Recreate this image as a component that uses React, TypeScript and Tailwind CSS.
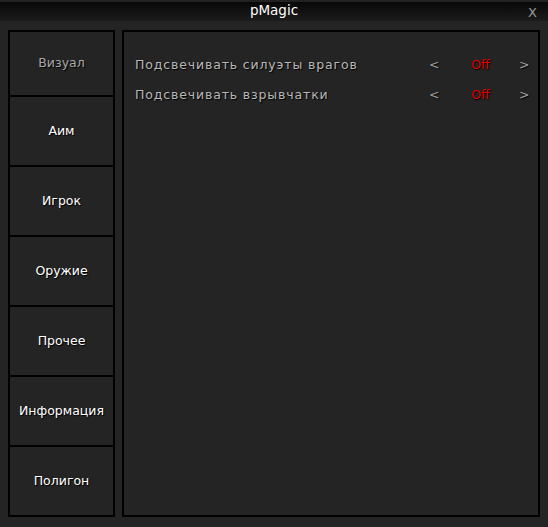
import React from "react";

const items = ["Визуал", "Аим", "Игрок", "Оружие", "Прочее", "Информация", "Полигон"];
const rows = ["Подсвечивать силуэты врагов", "Подсвечивать взрывчатки"];

export default function App() {
  return (
    <div
      className="w-[548px] h-[527px] bg-[#242424] flex flex-col overflow-hidden"
      style={{ fontFamily: '"DejaVu Sans", "Liberation Sans", sans-serif' }}
    >
      <div className="h-[21px] border-t-2 border-[#222] bg-gradient-to-b from-[#080808] to-[#1c1c1c] relative flex items-center justify-center">
        <span className="text-white text-[13.5px] leading-none -mt-[2px]">pMagic</span>
        <span className="absolute right-[11px] top-[1px] text-[#9a9a9a] text-[13px]">X</span>
      </div>
      <div className="flex gap-[7px] pl-[8px] pr-[8px] pt-[9px] pb-[10px] flex-1">
        <div className="w-[107px] border-2 border-black flex flex-col">
          {items.map((it, i) => (
            <div
              key={it}
              className={`flex items-center justify-center text-[12.5px] ${
                i > 0 ? "border-t-2 border-black h-[70px]" : "h-[63px]"
              } ${i === 0 ? "text-[#a8a8a8]" : "text-white"}`}
              style={{ textShadow: "1px 1px 1px #000" }}
            >
              {it}
            </div>
          ))}
        </div>
        <div className="flex-1 border-2 border-black pt-[23px] pl-[11px] pr-[9px] flex flex-col gap-[10px]">
          {rows.map((r) => (
            <div
              key={r}
              className="flex items-center h-[20px] text-[12.5px] tracking-[0.85px]"
              style={{ textShadow: "1px 1px 1px #000" }}
            >
              <span className="text-[#b8b8b8] flex-1">{r}</span>
              <span className="text-[#a0a0a0] w-[10px]">&lt;</span>
              <span className="text-[#e00000] w-[80px] text-center tracking-normal pl-[3px]">Off</span>
              <span className="text-[#a0a0a0] w-[10px]">&gt;</span>
            </div>
          ))}
        </div>
      </div>
    </div>
  );
}
